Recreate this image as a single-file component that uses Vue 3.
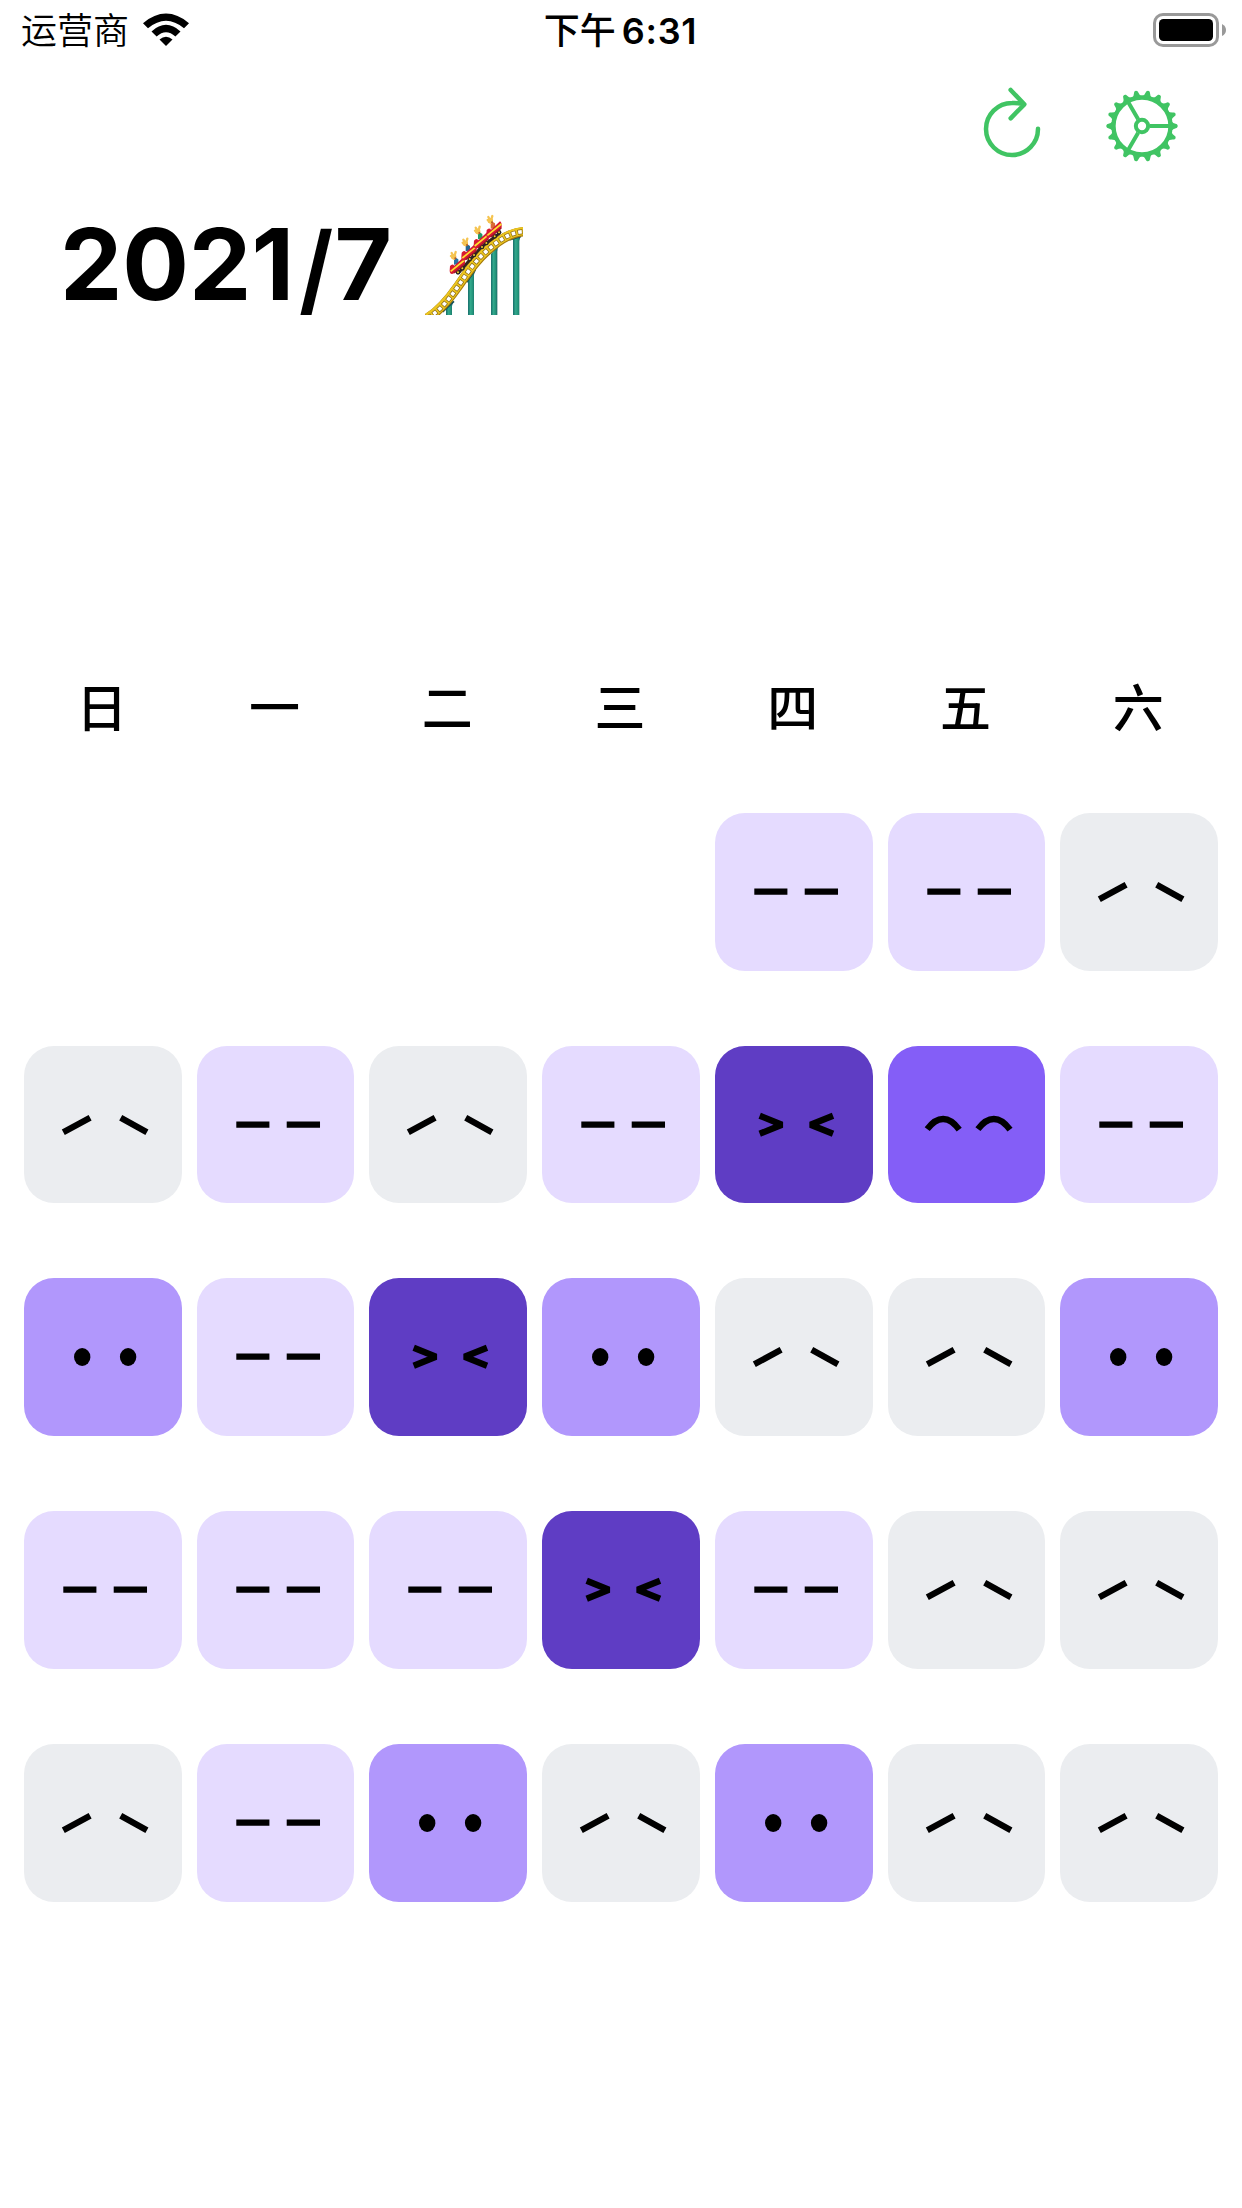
<script setup>
const weekdays = ['日', '一', '二', '三', '四', '五', '六']

// Mood level per day: 0 sad, 1 flat, 2 calm, 3 happy, 4 excited
const firstWeekday = 4
const days = [
  1, 1, 0,
  0, 1, 0, 1, 4, 3, 1,
  2, 1, 4, 2, 0, 0, 2,
  1, 1, 1, 4, 1, 0, 0,
  0, 1, 2, 0, 2, 0, 0,
]

const faces = [
  'M39.3 86.2L66.1 71.8M96.7 71.8L122.9 86.2',
  'M39.3 78.7H72.4M89.7 78.7H123',
  '',
  'M39.2 83.2C49.4 69.5 60.9 69.5 71.2 83.6M89.9 83.2C100.1 69.5 111.6 69.5 122 83.6',
  'M44.7 69.7L66.9 78.7L44.7 87.7M118 69.7L95.5 78.7L118 87.7',
]

const teeth = Array.from({ length: 18 }, (_, i) => i * 20)
const cars = [[142, 194], [177, 154], [214, 118], [252, 86]]
const shirts = ['#2873a8', '#28668f', '#239b65', '#d96b35']
</script>

<template>
  <main class="screen">
    <header class="status">
      <div class="carrier">
        <span>运营商</span>
        <svg class="wifi" width="46" height="34" viewBox="0 0 46 34">
          <path d="M0 10.2Q23-9 46 10.2L41 15.3Q23 .3 5 15.3Z" />
          <path d="M8.5 18.4Q23 5.2 37.5 18.4L32.4 23.5Q23 15 13.6 23.5Z" />
          <path d="M16.5 26.5Q23 20.8 29.5 26.5L23 33Z" />
        </svg>
      </div>
      <div class="time"><span class="ampm">下午</span><span class="clock">6:31</span></div>
      <div class="power">
        <svg width="74" height="36" viewBox="0 0 74 36">
          <rect x="1.5" y="1.5" width="63" height="31" rx="8.5" fill="none" stroke="#999" stroke-width="3" />
          <rect x="6" y="6" width="54" height="22" rx="4.5" />
          <path d="M69 11Q73 13 73 17T69 23Z" fill="#999" />
        </svg>
      </div>
    </header>

    <nav class="toolbar">
      <svg width="60" height="74" viewBox="66 48 180 222" fill="none" stroke="#40c463" stroke-width="13.5" stroke-linecap="round" stroke-linejoin="round">
        <path d="M234 176A78 78 0 1 1 156 99Q175 98 192 103M152 60L193 103L152 145" />
      </svg>
      <svg width="74" height="74" viewBox="435 59 222 222">
        <g transform="translate(546 170)">
          <g fill="none" stroke="#40c463">
            <circle r="85.5" stroke-width="13" />
            <circle r="18.5" stroke-width="12" />
            <path d="M23 0H84M-11.5-20L-42-73M-11.5 20L-42 73" stroke-width="12" />
          </g>
          <path v-for="a in teeth" :key="a" d="M87-16Q92-8 105-5Q110 0 105 5Q92 8 87 16Z" fill="#40c463" :transform="`rotate(${a})`" />
        </g>
      </svg>
    </nav>

    <h1 class="title">
      <span class="month">2021<span class="slash">/</span>7</span>
      <svg width="98" height="102" viewBox="45 40 294 306">
        <defs>
          <linearGradient id="post">
            <stop offset="0" stop-color="#176d6b" />
            <stop offset=".35" stop-color="#32a98c" />
            <stop offset=".7" stop-color="#219078" />
            <stop offset="1" stop-color="#174f5a" />
          </linearGradient>
        </defs>
        <g fill="url(#post)">
          <path d="M108 318L130 303L126 320V346H108Z" />
          <path d="M174 240L196 210L192 226V346H174Z" />
          <path d="M243 163L264 139L262 156V346H243Z" />
          <path d="M309 116L332 108L328 124V346H309Z" />
        </g>
        <path d="M98 337L132 305M170 248L196 211M236 164L264 141M300 120L333 110" stroke="#174f5a" stroke-width="5" fill="none" />
        <g fill="none">
          <path d="M52 356C88 334 112 306 142 263C172 220 192 187 230 154C268 120 304 96 344 96" stroke="#a57b0c" stroke-width="29" />
          <path d="M52 354C88 332 112 304 142 261C172 218 192 185 230 152C268 118 304 94 344 94" stroke="#ecc51f" stroke-width="25" />
          <path d="M52 356C88 334 112 306 142 263C172 220 192 187 230 154C268 120 304 96 344 96" stroke="#8a6a12" stroke-width="15" stroke-dasharray="15 5" />
          <path d="M52 356C88 334 112 306 142 263C172 220 192 187 230 154C268 120 304 96 344 96" stroke="#fff" stroke-width="11" stroke-dasharray="11 9" stroke-dashoffset="-2" />
        </g>
        <path d="M145 220L180 180L214 142L268 101" fill="none" stroke="#33251d" stroke-width="9" />
        <g v-for="(car, i) in cars" :key="i" :transform="`translate(${car[0]} ${car[1]})`">
          <circle cx="2" cy="24" r="7" fill="#292522" />
          <circle cx="15" cy="12" r="7" fill="#292522" />
          <circle cx="2" cy="24" r="3" fill="#f5d22f" />
          <circle cx="15" cy="12" r="3" fill="#f5d22f" />
          <path d="M-10-23L3-15L4-1L-10 1Z" :fill="shirts[i]" />
          <circle cx="-11" cy="-23" r="8" fill="#f2b53c" />
          <path d="M-10-22L-17-34M-9-23L-5-37M-10-17L-19-25" stroke="#f5c451" stroke-width="7" stroke-linecap="round" />
          <circle cx="-6" cy="-18" r="3" fill="#b45a26" />
          <path d="M-22 5Q-15-4-9 4L18-21Q24-18 23-2L-10 27Q-22 33-23 19Z" fill="#d71931" />
          <path d="M-20 21L22-13" stroke="#ffe02e" stroke-width="5" />
          <path d="M-10 26L22-1" stroke="#a01528" stroke-width="4" />
        </g>
      </svg>
    </h1>

    <div class="weekdays">
      <span v-for="day in weekdays" :key="day">{{ day }}</span>
    </div>

    <section class="calendar">
      <div v-for="n in firstWeekday" :key="`blank-${n}`"></div>
      <div v-for="(mood, i) in days" :key="i" class="day" :class="`mood-${mood}`">
        <svg viewBox="0 0 157.7 157.7">
          <g v-if="mood === 2">
            <ellipse cx="58.2" cy="79" rx="8.2" ry="8.9" />
            <ellipse cx="104.1" cy="79" rx="8.2" ry="8.9" />
          </g>
          <path v-else :d="faces[mood]" fill="none" stroke="#000" stroke-width="6.3" stroke-linejoin="bevel" />
        </svg>
      </div>
    </section>
  </main>
</template>

<style>
body {
  margin: 0;
  background: #fff;
}
</style>

<style scoped>
.screen {
  box-sizing: border-box;
  width: 1242px;
  height: 2208px;
  overflow: hidden;
  background: #fff;
  color: #000;
  font-family: Inter, "Noto Sans CJK SC", sans-serif;
}
.status {
  display: grid;
  grid-template-columns: 1fr auto 1fr;
  height: 60px;
  box-sizing: border-box;
  padding: 0 15px 0 21px;
  line-height: 63px;
  font-size: 36px;
}
.carrier {
  display: flex;
  font-weight: 350;
}
.wifi {
  margin: 13px 0 0 14px;
}
.time {
  display: flex;
  gap: 6px;
  margin-right: 7px;
  font-weight: 580;
}
.ampm {
  font-weight: 500;
}
.clock {
  letter-spacing: 0.7px;
}
.power {
  display: flex;
  justify-content: flex-end;
  padding-top: 13px;
}
.toolbar {
  display: flex;
  justify-content: flex-end;
  gap: 63px;
  height: 120px;
  box-sizing: border-box;
  padding: 29px 63px 0 0;
}
.toolbar svg:first-child {
  margin-top: -3px;
}
.title {
  display: flex;
  height: 170px;
  margin: 0;
  padding-left: 60px;
  font-size: 99px;
  line-height: 168px;
  font-weight: 700;
}
.month {
  width: 332px;
  font-feature-settings: "calt" 0;
  white-space: nowrap;
}
.slash {
  display: inline-block;
  margin-right: 2px;
  transform: translate(3px, 4px) scaleX(0.88);
}
.title svg {
  margin: 33px 0 0 33px;
}
.weekdays {
  display: grid;
  grid-template-columns: repeat(7, 1fr);
  gap: 15px;
  height: 100px;
  margin-top: 309px;
  padding: 0 25px 0 23px;
  text-align: center;
  font-size: 51px;
  line-height: 100px;
  font-weight: 500;
}
.calendar {
  display: grid;
  grid-template-columns: repeat(7, 1fr);
  gap: 75px 15px;
  margin-top: 54px;
  padding: 0 24px;
}
.day {
  aspect-ratio: 1;
  border-radius: 30px;
}
.day svg {
  display: block;
  width: 100%;
  height: 100%;
}
.mood-0 { background: #ebedf0; }
.mood-1 { background: #e5dbff; }
.mood-2 { background: #b197fc; }
.mood-3 { background: #845ef7; }
.mood-4 { background: #5f3dc4; }
</style>
